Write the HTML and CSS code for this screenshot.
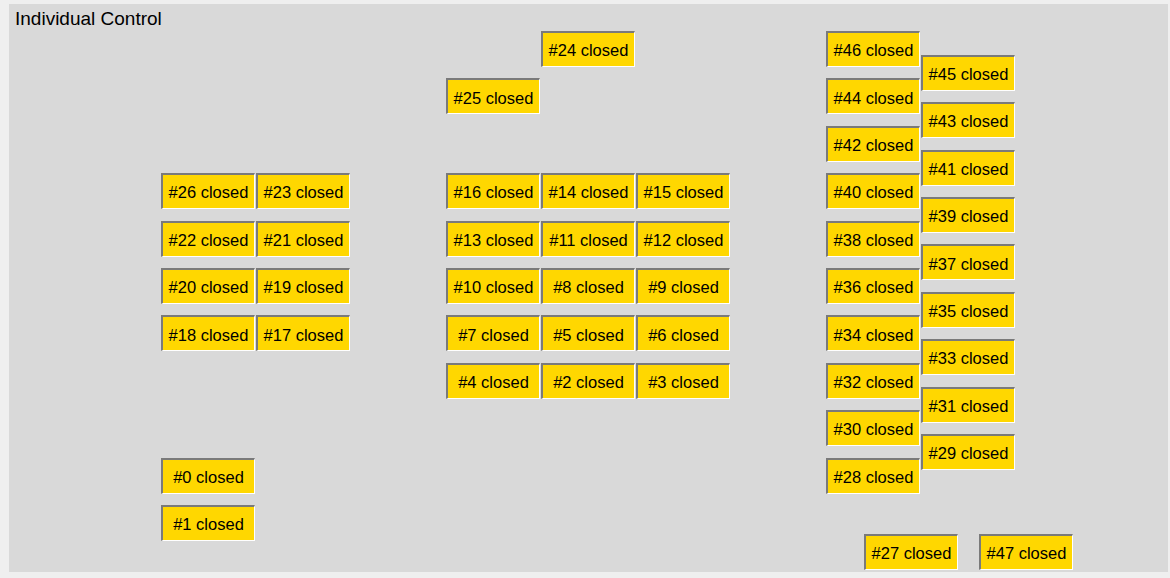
FILE: index.html
```html
<!DOCTYPE html>
<html>
<head>
<meta charset="utf-8">
<title>Individual Control</title>
<link rel="stylesheet" href="styles.css">
</head>
<body>
<section class="panel">
  <h1 class="title">Individual Control</h1>
  <div class="canvas">
    <button class="valve" style="--c:4;--h:0">#24 closed</button>
    <button class="valve" style="--c:3;--h:2">#25 closed</button>

    <button class="valve" style="--c:7;--h:0">#46 closed</button>
    <button class="valve" style="--c:8;--h:1">#45 closed</button>
    <button class="valve" style="--c:7;--h:2">#44 closed</button>
    <button class="valve" style="--c:8;--h:3">#43 closed</button>
    <button class="valve" style="--c:7;--h:4">#42 closed</button>
    <button class="valve" style="--c:8;--h:5">#41 closed</button>
    <button class="valve" style="--c:7;--h:6">#40 closed</button>
    <button class="valve" style="--c:8;--h:7">#39 closed</button>
    <button class="valve" style="--c:7;--h:8">#38 closed</button>
    <button class="valve" style="--c:8;--h:9">#37 closed</button>
    <button class="valve" style="--c:7;--h:10">#36 closed</button>
    <button class="valve" style="--c:8;--h:11">#35 closed</button>
    <button class="valve" style="--c:7;--h:12">#34 closed</button>
    <button class="valve" style="--c:8;--h:13">#33 closed</button>
    <button class="valve" style="--c:7;--h:14">#32 closed</button>
    <button class="valve" style="--c:8;--h:15">#31 closed</button>
    <button class="valve" style="--c:7;--h:16">#30 closed</button>
    <button class="valve" style="--c:8;--h:17">#29 closed</button>
    <button class="valve" style="--c:7;--h:18">#28 closed</button>

    <button class="valve" style="--c:0;--h:6">#26 closed</button>
    <button class="valve" style="--c:1;--h:6">#23 closed</button>
    <button class="valve" style="--c:0;--h:8">#22 closed</button>
    <button class="valve" style="--c:1;--h:8">#21 closed</button>
    <button class="valve" style="--c:0;--h:10">#20 closed</button>
    <button class="valve" style="--c:1;--h:10">#19 closed</button>
    <button class="valve" style="--c:0;--h:12">#18 closed</button>
    <button class="valve" style="--c:1;--h:12">#17 closed</button>

    <button class="valve" style="--c:3;--h:6">#16 closed</button>
    <button class="valve" style="--c:4;--h:6">#14 closed</button>
    <button class="valve" style="--c:5;--h:6">#15 closed</button>
    <button class="valve" style="--c:3;--h:8">#13 closed</button>
    <button class="valve" style="--c:4;--h:8">#11 closed</button>
    <button class="valve" style="--c:5;--h:8">#12 closed</button>
    <button class="valve" style="--c:3;--h:10">#10 closed</button>
    <button class="valve" style="--c:4;--h:10">#8 closed</button>
    <button class="valve" style="--c:5;--h:10">#9 closed</button>
    <button class="valve" style="--c:3;--h:12">#7 closed</button>
    <button class="valve" style="--c:4;--h:12">#5 closed</button>
    <button class="valve" style="--c:5;--h:12">#6 closed</button>
    <button class="valve" style="--c:3;--h:14">#4 closed</button>
    <button class="valve" style="--c:4;--h:14">#2 closed</button>
    <button class="valve" style="--c:5;--h:14">#3 closed</button>

    <button class="valve" style="--c:0;--h:18">#0 closed</button>
    <button class="valve" style="--c:0;--h:20">#1 closed</button>

    <button class="valve valve-free" style="--x:855px;--y:530px">#27 closed</button>
    <button class="valve valve-free" style="--x:970px;--y:530px">#47 closed</button>
  </div>
</section>
</body>
</html>
```

FILE: styles.css
```css
html, body {
  margin: 0;
  padding: 0;
  background: #efefef;
}

body {
  padding: 4px 2px 6px 9px;
  font-family: "Liberation Sans", Arial, sans-serif;
}

.panel {
  position: relative;
  width: 1159px;
  height: 568px;
  background: #d9d9d9;
  box-sizing: border-box;
}

.title {
  margin: 0;
  padding: 4px 0 0 6px;
  font-size: 19px;
  font-weight: normal;
  color: #000;
  line-height: 22px;
}

.canvas {
  position: absolute;
  inset: 0;
}

.valve {
  position: absolute;
  left: calc(152px + var(--c) * 95px);
  top: calc(27px + var(--h) * 23.7px);
  width: 94px;
  height: 36px;
  box-sizing: border-box;
  margin: 0;
  padding: 2px 0 0;
  background: #ffd700;
  border-style: solid;
  border-width: 2px 1px 1px 2px;
  border-color: #7a7a7a #ffffff #ffffff #7a7a7a;
  font-family: "Liberation Sans", Arial, sans-serif;
  font-size: 16.5px;
  color: #000;
  display: flex;
  align-items: center;
  justify-content: center;
  line-height: 1;
}

.valve-free {
  left: var(--x);
  top: var(--y);
}
```
